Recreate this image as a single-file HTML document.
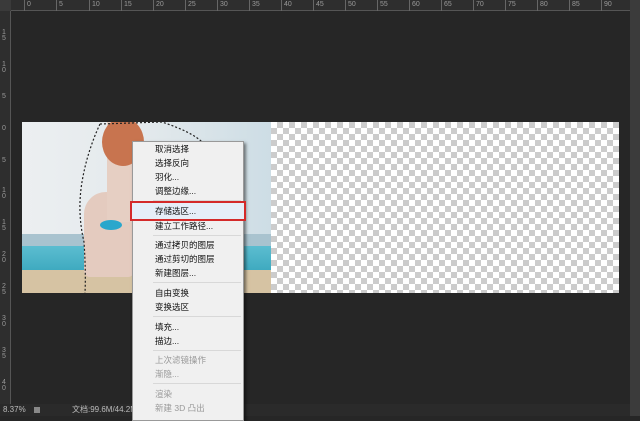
<!DOCTYPE html><html><head><meta charset="utf-8"><style>
*{margin:0;padding:0;box-sizing:border-box}
body{width:640px;height:416px;background:#262626;position:relative;overflow:hidden;font-family:"Liberation Sans","Noto Sans CJK SC",sans-serif}
.rt{position:absolute;left:0;top:0;width:630px;height:11px;background:#2e2e2e;border-bottom:1px solid #555}
.rl{position:absolute;left:0;top:0;width:11px;height:404px;background:#2e2e2e;border-right:1px solid #555}
.corner{position:absolute;left:0;top:0;width:11px;height:11px;background:#3a3a3a}
.tl{position:absolute;top:0;font-size:7px;color:#999;border-left:1px solid #666;height:11px;padding-left:2px;line-height:9px}
.vl{position:absolute;left:2px;font-size:7px;color:#999;line-height:6px;width:6px}
.sb{position:absolute;left:630px;top:0;width:10px;height:416px;background:#3b3b3b}
.checker{position:absolute;left:271px;top:122px;width:348px;height:171px;background-color:#fff;background-image:linear-gradient(45deg,#ccc 25%,transparent 25%,transparent 75%,#ccc 75%),linear-gradient(45deg,#ccc 25%,transparent 25%,transparent 75%,#ccc 75%);background-size:12px 12px;background-position:0 0,6px 6px}
.img{position:absolute;left:22px;top:122px;width:249px;height:171px;background:linear-gradient(90deg,#eceff1,#e3e9ec 50%,#cddde5);overflow:hidden}
.status{position:absolute;left:0;top:404px;width:630px;height:12px;background:#2a2a2a;font-size:8px;color:#bbb;line-height:12px}
.menu{position:absolute;left:132px;top:141px;width:112px;height:280px;background:#f0f0f0;border:1px solid #999;box-shadow:2px 2px 3px rgba(0,0,0,.5)}
.it{position:absolute;left:22px;font-size:8.5px;color:#111;line-height:12px;white-space:nowrap}
.dis{color:#999}
.sep{position:absolute;left:20px;right:2px;height:1px;background:#d8d8d8}
</style></head><body>
<div class="rt"></div><div class="rl"></div><div class="corner"></div>
<div class="tl" style="left:24px">0</div><div class="tl" style="left:56px">5</div><div class="tl" style="left:89px">10</div><div class="tl" style="left:121px">15</div><div class="tl" style="left:153px">20</div><div class="tl" style="left:185px">25</div><div class="tl" style="left:217px">30</div><div class="tl" style="left:249px">35</div><div class="tl" style="left:281px">40</div><div class="tl" style="left:313px">45</div><div class="tl" style="left:345px">50</div><div class="tl" style="left:377px">55</div><div class="tl" style="left:409px">60</div><div class="tl" style="left:441px">65</div><div class="tl" style="left:473px">70</div><div class="tl" style="left:505px">75</div><div class="tl" style="left:537px">80</div><div class="tl" style="left:569px">85</div><div class="tl" style="left:601px">90</div>
<div class="vl" style="top:30px">1<br>5</div><div class="vl" style="top:62px">1<br>0</div><div class="vl" style="top:94px">5</div><div class="vl" style="top:126px">0</div><div class="vl" style="top:158px">5</div><div class="vl" style="top:188px">1<br>0</div><div class="vl" style="top:220px">1<br>5</div><div class="vl" style="top:252px">2<br>0</div><div class="vl" style="top:284px">2<br>5</div><div class="vl" style="top:316px">3<br>0</div><div class="vl" style="top:348px">3<br>5</div><div class="vl" style="top:380px">4<br>0</div>
<div class="sb"></div>
<div class="checker"></div>
<div class="img">
<div style="position:absolute;left:0;top:112px;width:249px;height:12px;background:#a9c3cf"></div>
<div style="position:absolute;left:0;top:124px;width:249px;height:28px;background:linear-gradient(#5cbdd0,#3aa7bd)"></div>
<div style="position:absolute;left:0;top:148px;width:249px;height:23px;background:#d6c3a3"></div>
<div style="position:absolute;left:62px;top:70px;width:50px;height:85px;background:#e4cbbf;border-radius:22px 20px 6px 6px"></div>
<div style="position:absolute;left:85px;top:0;width:30px;height:100px;background:#e6cfc3"></div>
<div style="position:absolute;left:80px;top:-4px;width:42px;height:48px;background:#c8744f;border-radius:50%"></div>
<div style="position:absolute;left:78px;top:98px;width:22px;height:10px;background:#2aa7cc;border-radius:50%"></div>
<svg style="position:absolute;left:0;top:0" width="249" height="171"><path d="M78 2 L140 0 Q170 10 180 20 M78 2 Q65 30 60 60 Q55 90 62 120 Q64 150 63 171" fill="none" stroke="#222" stroke-width="1.2" stroke-dasharray="2 2"/></svg>
</div>
<div class="status"><span style="position:absolute;left:3px">8.37%</span><span style="position:absolute;left:34px;top:3px;width:6px;height:6px;background:#888"></span><span style="position:absolute;left:72px">文档:99.6M/44.2M</span></div>
<div class="menu">
<div class="it" style="top:1px">取消选择</div>
<div class="it" style="top:15px">选择反向</div>
<div class="it" style="top:29px">羽化...</div>
<div class="it" style="top:43px">调整边缘...</div>
<div class="sep" style="top:58px"></div>
<div style="position:absolute;left:-3px;top:59px;width:116px;height:20px;border:2px solid #d42a2a;background:#e6eef8"></div>
<div class="it" style="top:63px">存储选区...</div>
<div class="it" style="top:78px">建立工作路径...</div>
<div class="sep" style="top:93px"></div>
<div class="it" style="top:97px">通过拷贝的图层</div>
<div class="it" style="top:111px">通过剪切的图层</div>
<div class="it" style="top:125px">新建图层...</div>
<div class="sep" style="top:140px"></div>
<div class="it" style="top:145px">自由变换</div>
<div class="it" style="top:159px">变换选区</div>
<div class="sep" style="top:174px"></div>
<div class="it" style="top:179px">填充...</div>
<div class="it" style="top:193px">描边...</div>
<div class="sep" style="top:208px"></div>
<div class="it dis" style="top:212px">上次滤镜操作</div>
<div class="it dis" style="top:226px">渐隐...</div>
<div class="sep" style="top:241px"></div>
<div class="it dis" style="top:246px">渲染</div>
<div class="it dis" style="top:260px">新建 3D 凸出</div>
</div>
</body></html>
